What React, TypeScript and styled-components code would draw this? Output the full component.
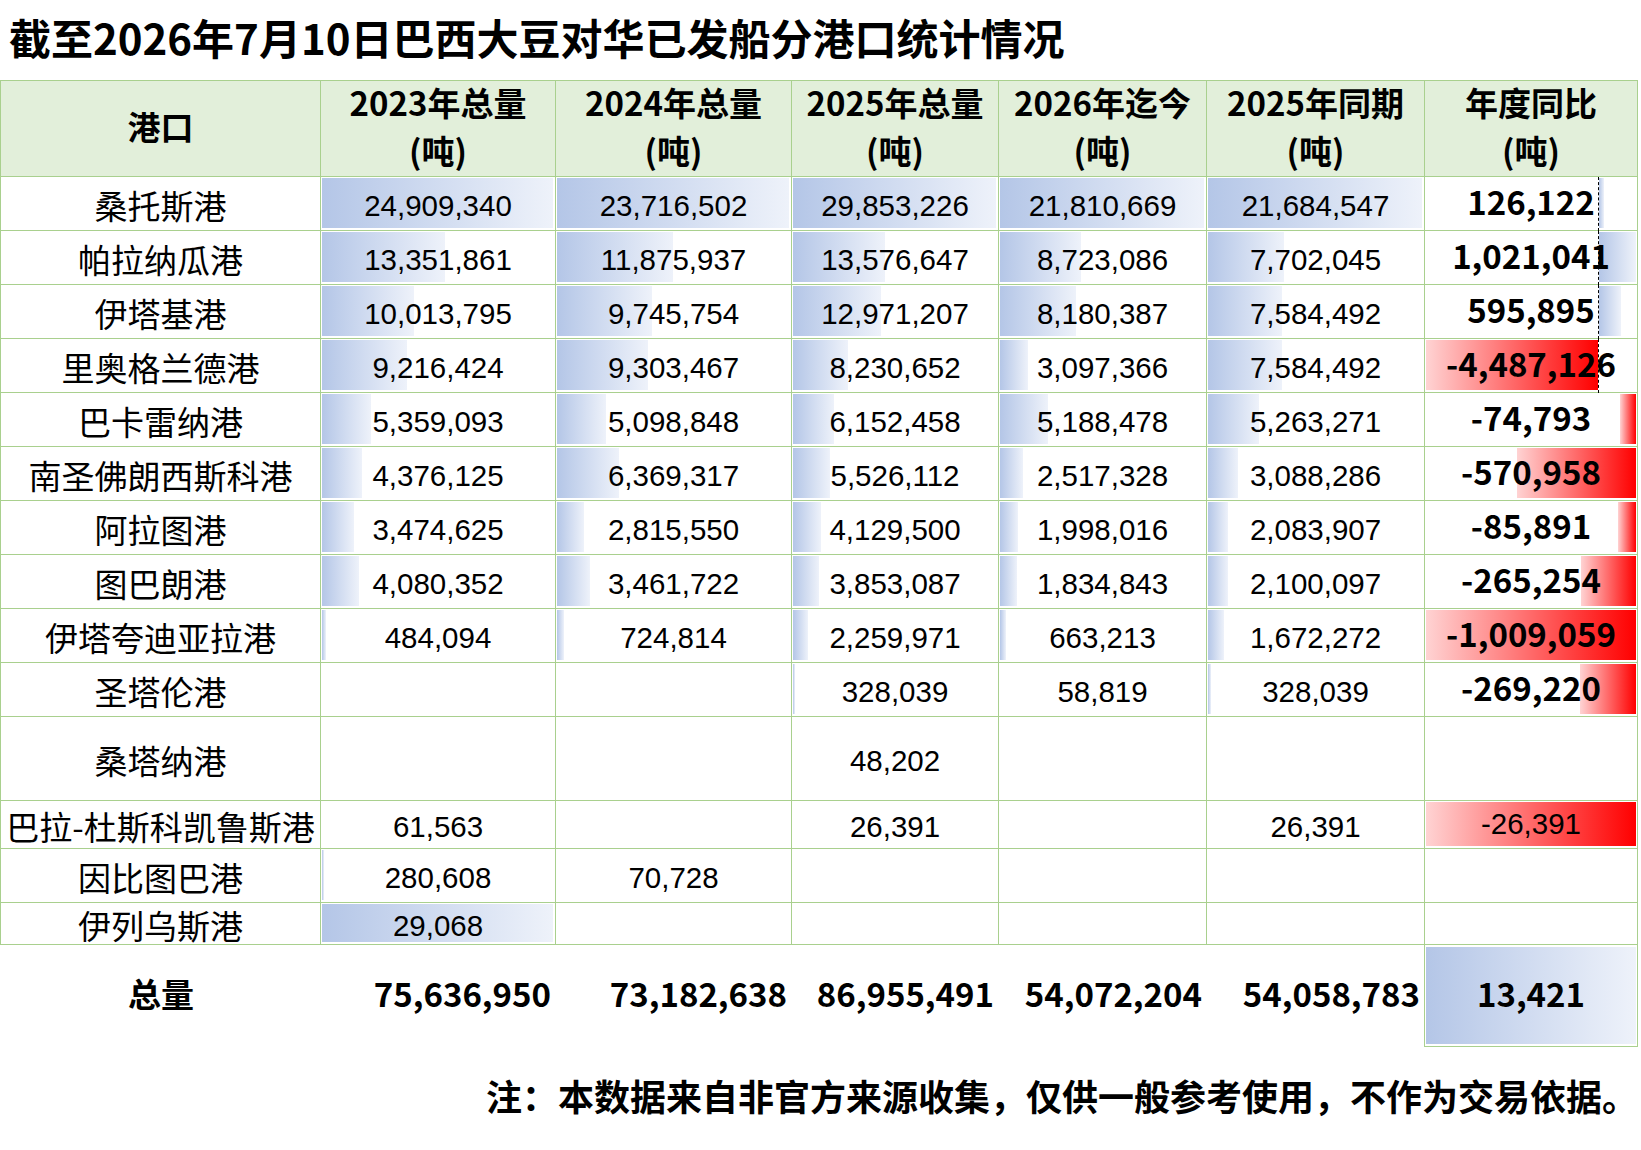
import React from "react";
import styled, { createGlobalStyle } from "styled-components";

const GREEN = "#a9d08e";
const COLS = [320, 235, 236, 207, 208, 218, 213];
const GRID = COLS.map((c) => `${c}px`).join(" ");

const GlobalStyle = createGlobalStyle`
  html, body { margin: 0; padding: 0; background: #ffffff; }
  body { font-family: "Noto Sans CJK SC", "Noto Sans", sans-serif; color: #000; }
`;

const Page = styled.div`
  width: 1641px;
  height: 1150px;
  overflow: hidden;
  background: #fff;
`;

const Title = styled.h1`
  margin: 0;
  height: 80px;
  box-sizing: border-box;
  padding: 0 0 8px 9px;
  display: flex;
  align-items: center;
  font-size: 42px;
  font-weight: 700;
  white-space: nowrap;
`;

const Table = styled.div`
  width: 1638px;
  border-left: 1px solid ${GREEN};
  border-top: 1px solid ${GREEN};
  box-sizing: border-box;
  display: flex;
  flex-direction: column;
`;

const Row = styled.div<{ $h: number }>`
  display: grid;
  grid-template-columns: ${GRID};
  grid-template-rows: minmax(0, 1fr);
  height: ${(p) => p.$h}px;
  min-height: 0;
  flex: 0 0 auto;
`;

const Cell = styled.div`
  position: relative;
  box-sizing: border-box;
  min-height: 0;
  border-right: 1px solid ${GREEN};
  border-bottom: 1px solid ${GREEN};
  display: flex;
  align-items: center;
  justify-content: center;
  white-space: nowrap;
  overflow: visible;
`;

const HeadCell = styled(Cell)`
  background: #e2efda;
  flex-direction: column;
  font-size: 33px;
  font-weight: 700;
  line-height: 48px;
  text-align: center;
  padding-bottom: 5px;
`;

const PortCell = styled(Cell)`
  font-size: 33px;
  padding-top: 2px;
`;

const NumCell = styled(Cell)`
  font-family: "Liberation Sans", Arial, sans-serif;
  font-size: 29.5px;
  padding-top: 4px;
`;

const ChangeCell = styled(Cell)<{ $bold: boolean }>`
  font-family: ${(p) =>
    p.$bold ? `"Noto Sans CJK SC", sans-serif` : `"Liberation Sans", Arial, sans-serif`};
  font-size: ${(p) => (p.$bold ? "33px" : "29.5px")};
  font-weight: ${(p) => (p.$bold ? 700 : 400)};
  padding-bottom: ${(p) => (p.$bold ? "5px" : "2px")};
`;

const Label = styled.span`
  position: relative;
  z-index: 2;
`;

const BlueBar = styled.div`
  position: absolute;
  top: 1px;
  bottom: 2px;
  left: 1px;
  background: linear-gradient(to right, #b4c6e7, #eef2fa);
  z-index: 0;
`;

const RedBar = styled.div`
  position: absolute;
  top: 1px;
  bottom: 2px;
  background: linear-gradient(to right, #ffd3d3, #ff0000);
  z-index: 0;
`;

const Axis = styled.div`
  position: absolute;
  top: 0;
  bottom: -1px;
  left: 173px;
  width: 0;
  border-left: 1px dashed #000;
  z-index: 1;
`;

const TotalRow = styled.div`
  display: grid;
  grid-template-columns: ${GRID};
  grid-template-rows: minmax(0, 1fr);
  height: 102px;
  padding-left: 1px;
`;

const TotalCell = styled.div<{ $align: "center" | "right" }>`
  position: relative;
  box-sizing: border-box;
  display: flex;
  align-items: center;
  justify-content: ${(p) => (p.$align === "right" ? "flex-end" : "center")};
  padding-right: ${(p) => (p.$align === "right" ? "5px" : "0")};
  padding-bottom: 6px;
  font-size: 33px;
  font-weight: 700;
  white-space: nowrap;
`;

const TotalBox = styled(TotalCell)`
  margin-left: -1px;
  border-left: 1px solid ${GREEN};
  border-right: 1px solid ${GREEN};
  border-bottom: 1px solid ${GREEN};
`;

const FullBar = styled.div`
  position: absolute;
  top: 2px;
  bottom: 2px;
  left: 1px;
  right: 1px;
  background: linear-gradient(to right, #b4c6e7, #eef2fa);
`;

const Note = styled.div`
  padding: 22px 3px 0 0;
  text-align: right;
  font-size: 36px;
  font-weight: 700;
  white-space: nowrap;
`;

type Val = number | null;
interface PortRow {
  name: string;
  h: number;
  vals: Val[];
  change: Val;
  bars: boolean;
  fullFirst?: boolean;
}

const rows: PortRow[] = [
  { name: "桑托斯港", h: 54, vals: [24909340, 23716502, 29853226, 21810669, 21684547], change: 126122, bars: true },
  { name: "帕拉纳瓜港", h: 54, vals: [13351861, 11875937, 13576647, 8723086, 7702045], change: 1021041, bars: true },
  { name: "伊塔基港", h: 54, vals: [10013795, 9745754, 12971207, 8180387, 7584492], change: 595895, bars: true },
  { name: "里奥格兰德港", h: 54, vals: [9216424, 9303467, 8230652, 3097366, 7584492], change: -4487126, bars: true },
  { name: "巴卡雷纳港", h: 54, vals: [5359093, 5098848, 6152458, 5188478, 5263271], change: -74793, bars: true },
  { name: "南圣佛朗西斯科港", h: 54, vals: [4376125, 6369317, 5526112, 2517328, 3088286], change: -570958, bars: true },
  { name: "阿拉图港", h: 54, vals: [3474625, 2815550, 4129500, 1998016, 2083907], change: -85891, bars: true },
  { name: "图巴朗港", h: 54, vals: [4080352, 3461722, 3853087, 1834843, 2100097], change: -265254, bars: true },
  { name: "伊塔夸迪亚拉港", h: 54, vals: [484094, 724814, 2259971, 663213, 1672272], change: -1009059, bars: true },
  { name: "圣塔伦港", h: 54, vals: [null, null, 328039, 58819, 328039], change: -269220, bars: true },
  { name: "桑塔纳港", h: 84, vals: [null, null, 48202, null, null], change: null, bars: false },
  { name: "巴拉-杜斯科凯鲁斯港", h: 48, vals: [61563, null, 26391, null, 26391], change: -26391, bars: false },
  { name: "因比图巴港", h: 54, vals: [280608, 70728, null, null, null], change: null, bars: true },
  { name: "伊列乌斯港", h: 42, vals: [29068, null, null, null, null], change: null, bars: false, fullFirst: true },
];

const colMax = [24909340, 23716502, 29853226, 21810669, 21684547];
const fmt = (n: number) => n.toLocaleString("en-US");

const headers = [
  ["港口"],
  ["2023年总量", "(吨)"],
  ["2024年总量", "(吨)"],
  ["2025年总量", "(吨)"],
  ["2026年迄今", "(吨)"],
  ["2025年同期", "(吨)"],
  ["年度同比", "(吨)"],
];

function DataCell({ v, col, bars, full }: { v: Val; col: number; bars: boolean; full?: boolean }) {
  const inner = COLS[col + 1] - 1;
  const maxW = inner - 3;
  let w = 0;
  if (v !== null && full) w = maxW;
  else if (v !== null && bars) w = Math.floor((v / colMax[col]) * maxW);
  return (
    <NumCell>
      {w > 0 && <BlueBar style={{ width: w }} />}
      {v !== null && <Label>{fmt(v)}</Label>}
    </NumCell>
  );
}

function ChangeValue({ v, index }: { v: Val; index: number }) {
  if (v === null) return <ChangeCell $bold={true} />;
  const bold = index <= 9;
  let bar: React.ReactNode = null;
  if (index <= 3) {
    if (v > 0) {
      const w = Math.round((v / 1021041) * 37);
      bar = <BlueBar style={{ left: 174, width: w }} />;
    } else {
      bar = <RedBar style={{ left: 1, width: 172 }} />;
    }
  } else if (index <= 9) {
    const w = Math.round((-v / 1009059) * 210);
    bar = <RedBar style={{ right: 1, width: w }} />;
  } else {
    bar = <RedBar style={{ left: 1, right: 1 }} />;
  }
  return (
    <ChangeCell $bold={bold}>
      {bar}
      {index <= 3 && <Axis />}
      <Label>{fmt(v)}</Label>
    </ChangeCell>
  );
}

export default function App() {
  return (
    <Page>
      <GlobalStyle />
      <Title>截至2026年7月10日巴西大豆对华已发船分港口统计情况</Title>
      <Table>
        <Row $h={96}>
          {headers.map((h, i) => (
            <HeadCell key={i}>
              {h.map((line, j) => (
                <span key={j}>{line}</span>
              ))}
            </HeadCell>
          ))}
        </Row>
        {rows.map((r, i) => (
          <Row $h={r.h} key={r.name}>
            <PortCell>{r.name}</PortCell>
            {r.vals.map((v, c) => (
              <DataCell key={c} v={v} col={c} bars={r.bars} full={r.fullFirst && c === 0} />
            ))}
            <ChangeValue v={r.change} index={i} />
          </Row>
        ))}
      </Table>
      <TotalRow>
        <TotalCell $align="center">总量</TotalCell>
        <TotalCell $align="right">75,636,950</TotalCell>
        <TotalCell $align="right">73,182,638</TotalCell>
        <TotalCell $align="right">86,955,491</TotalCell>
        <TotalCell $align="right">54,072,204</TotalCell>
        <TotalCell $align="right">54,058,783</TotalCell>
        <TotalBox $align="center">
          <FullBar />
          <Label>13,421</Label>
        </TotalBox>
      </TotalRow>
      <Note>注：本数据来自非官方来源收集，仅供一般参考使用，不作为交易依据。</Note>
    </Page>
  );
}
